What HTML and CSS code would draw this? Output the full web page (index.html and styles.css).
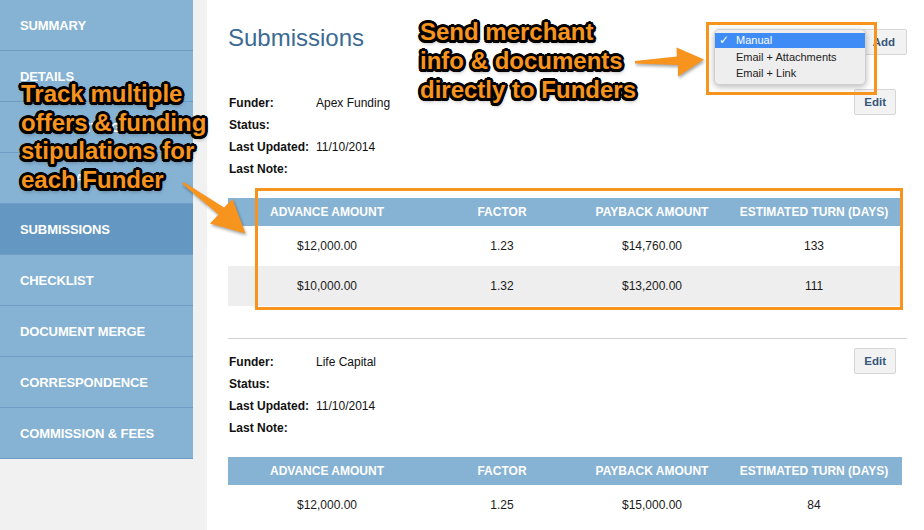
FILE: index.html
```html
<!DOCTYPE html>
<html>
<head>
<meta charset="utf-8">
<link rel="stylesheet" href="styles.css">
</head>
<body>
<div class="app">
  <nav class="sidebar">
    <a class="nav-item">SUMMARY</a>
    <a class="nav-item">DETAILS</a>
    <a class="nav-item">UNDERWRITING</a>
    <a class="nav-item">SCORECARD</a>
    <a class="nav-item active">SUBMISSIONS</a>
    <a class="nav-item">CHECKLIST</a>
    <a class="nav-item">DOCUMENT MERGE</a>
    <a class="nav-item">CORRESPONDENCE</a>
    <a class="nav-item">COMMISSION &amp; FEES</a>
  </nav>
  <main class="main">
    <div class="page-head">
      <h1 class="title">Submissions</h1>
      <button class="btn btn-add">Add</button>
    </div>

    <section class="sub sub-first">
      <div class="sub-top">
        <dl class="info">
          <div class="info-row"><dt>Funder:</dt><dd>Apex Funding</dd></div>
          <div class="info-row"><dt>Status:</dt><dd></dd></div>
          <div class="info-row"><dt>Last Updated:</dt><dd>11/10/2014</dd></div>
          <div class="info-row"><dt>Last Note:</dt><dd></dd></div>
        </dl>
        <button class="btn btn-edit">Edit</button>
      </div>
      <table class="offers">
        <colgroup><col class="c1"><col class="c2"><col class="c3"><col class="c4"></colgroup>
        <thead><tr><th>ADVANCE AMOUNT</th><th>FACTOR</th><th>PAYBACK AMOUNT</th><th>ESTIMATED TURN (DAYS)</th></tr></thead>
        <tbody>
          <tr><td>$12,000.00</td><td>1.23</td><td>$14,760.00</td><td>133</td></tr>
          <tr class="alt"><td>$10,000.00</td><td>1.32</td><td>$13,200.00</td><td>111</td></tr>
        </tbody>
      </table>
    </section>

    <section class="sub sub-next">
      <div class="sub-top">
        <dl class="info">
          <div class="info-row"><dt>Funder:</dt><dd>Life Capital</dd></div>
          <div class="info-row"><dt>Status:</dt><dd></dd></div>
          <div class="info-row"><dt>Last Updated:</dt><dd>11/10/2014</dd></div>
          <div class="info-row"><dt>Last Note:</dt><dd></dd></div>
        </dl>
        <button class="btn btn-edit">Edit</button>
      </div>
      <table class="offers">
        <colgroup><col class="c1"><col class="c2"><col class="c3"><col class="c4"></colgroup>
        <thead><tr><th>ADVANCE AMOUNT</th><th>FACTOR</th><th>PAYBACK AMOUNT</th><th>ESTIMATED TURN (DAYS)</th></tr></thead>
        <tbody>
          <tr><td>$12,000.00</td><td>1.25</td><td>$15,000.00</td><td>84</td></tr>
        </tbody>
      </table>
    </section>
  </main>
</div>

<div class="menu">
  <div class="menu-item selected"><span class="check">✓</span>Manual</div>
  <div class="menu-item">Email + Attachments</div>
  <div class="menu-item">Email + Link</div>
</div>

<div class="hl hl-menu"></div>
<div class="hl hl-table"></div>

<svg class="arrows" width="924" height="530" viewBox="0 0 924 530">
  <polygon class="arrow" points="183.5,182 224,207.5 232.5,199 245.5,233.5 210,223.5 218.5,214.5 182.5,184"/>
  <polygon class="arrow" points="635,61 677,56.5 676.5,47.5 704,59.5 678,76.5 678,65 635,63.5"/>
</svg>

<div class="callout callout-left">Track multiple<br>offers &amp; funding<br>stipulations for<br>each Funder</div>
<div class="callout callout-right">Send merchant<br>info &amp; documents<br>directly to Funders</div>
</body>
</html>
```

FILE: styles.css
```css
* { box-sizing: border-box; }
html, body {
  margin: 0;
  padding: 0;
  width: 924px;
  height: 530px;
  overflow: hidden;
  font-family: "Liberation Sans", Arial, Helvetica, sans-serif;
  color: #111;
}
body { position: relative; }

.app {
  display: flex;
  align-items: flex-start;
  width: 924px;
  height: 530px;
  background: #f1f1f1;
}

.sidebar {
  width: 193px;
  flex: 0 0 193px;
  display: flex;
  flex-direction: column;
  background: #86b2d3;
}
.nav-item {
  display: flex;
  align-items: center;
  height: 51px;
  padding: 0 0 0 20px;
  border-bottom: 1px solid #6f9cc2;
  color: #fff;
  font-size: 13px;
  font-weight: bold;
  letter-spacing: -0.1px;
  cursor: pointer;
}
.nav-item.active { background: #6497c1; }

.main {
  flex: 1;
  margin-left: 14px;
  height: 530px;
  background: #fff;
  padding: 0 17px 0 21px;
}

.page-head {
  display: flex;
  justify-content: space-between;
  align-items: flex-start;
  height: 79px;
}
.title {
  margin: 24px 0 0 0;
  font-size: 24px;
  line-height: 28px;
  font-weight: normal;
  color: #3b6a95;
}

.btn {
  height: 26px;
  padding: 0 9px;
  background: #f2f2f2;
  border: 1px solid #d6d6d6;
  border-radius: 2px;
  font-family: "Liberation Sans", Arial, sans-serif;
  font-size: 11.5px;
  font-weight: bold;
  color: #34567a;
}
.btn-add { margin-top: 29px; padding: 0 11px; }
.btn-edit { margin-right: 11px; }

.sub-first { padding: 10px 0 32px 0; }
.sub-next { border-top: 1px solid #d2d2d2; padding-top: 9px; }

.sub-top {
  display: flex;
  justify-content: space-between;
  align-items: flex-start;
}
.info { margin: 3px 0 0 1px; }
.info-row {
  display: flex;
  height: 22px;
  align-items: center;
  font-size: 12px;
}
.info-row dt { width: 87px; font-weight: bold; }
.info-row dd { margin: 0; }

.offers {
  margin-top: 18px;
  width: 674px;
  border-collapse: collapse;
  table-layout: fixed;
  font-size: 12px;
}
.c1 { width: 198px; }
.c2 { width: 152px; }
.c3 { width: 148px; }
.c4 { width: 176px; }
.offers th {
  height: 28px;
  padding: 0;
  background: #86b2d3;
  color: #fff;
  font-weight: bold;
  text-align: center;
}
.offers td {
  height: 40px;
  padding: 0;
  text-align: center;
  color: #1a1a1a;
}
.offers tr.alt td { background: #eeeeee; }

/* overlay: dropdown menu */
.menu {
  position: absolute;
  left: 714px;
  top: 29px;
  width: 152px;
  height: 56px;
  padding-top: 3px;
  background: #eeeeee;
  border: 1px solid #cfcfcf;
  border-radius: 5px;
  box-shadow: 0 2px 6px rgba(0,0,0,0.28);
  font-size: 11px;
  color: #222;
}
.menu-item {
  position: relative;
  height: 16px;
  line-height: 16px;
  padding-left: 21px;
}
.menu-item.selected {
  background: #3f8cf6;
  color: #fff;
  height: 15px;
  line-height: 15px;
  margin-bottom: 1px;
}
.check {
  position: absolute;
  left: 4px;
  top: 0;
  font-weight: bold;
  font-size: 12px;
  font-family: "DejaVu Sans", sans-serif;
}

/* overlay: highlight boxes */
.hl {
  position: absolute;
  border: 3px solid #f7941d;
}
.hl-menu { left: 706px; top: 22px; width: 171px; height: 73px; }
.hl-table { left: 255px; top: 188px; width: 648px; height: 122px; }

.arrows {
  position: absolute;
  left: 0;
  top: 0;
  pointer-events: none;
}
.arrow {
  fill: #f7941d;
  filter: drop-shadow(1px 2px 1.5px rgba(0,0,0,0.35));
}

/* overlay: callout captions */
.callout {
  position: absolute;
  color: #f7941d;
  font-family: "Liberation Sans", Arial, sans-serif;
  font-weight: bold;
  font-size: 24px;
  white-space: nowrap;
  text-shadow:
    -2px -2px 0 #000, 2px -2px 0 #000, -2px 2px 0 #000, 2px 2px 0 #000,
    0 -3px 0 #000, 0 3px 0 #000, -3px 0 0 #000, 3px 0 0 #000,
    -1.5px -2.5px 0 #000, 1.5px -2.5px 0 #000, -1.5px 2.5px 0 #000, 1.5px 2.5px 0 #000,
    -2.5px -1.5px 0 #000, 2.5px -1.5px 0 #000, -2.5px 1.5px 0 #000, 2.5px 1.5px 0 #000,
    1px 3px 4px rgba(0,0,0,0.5);
}
.callout-left { left: 21px; top: 80px; line-height: 28.5px; }
.callout-right { left: 420px; top: 17px; line-height: 29px; }
```
